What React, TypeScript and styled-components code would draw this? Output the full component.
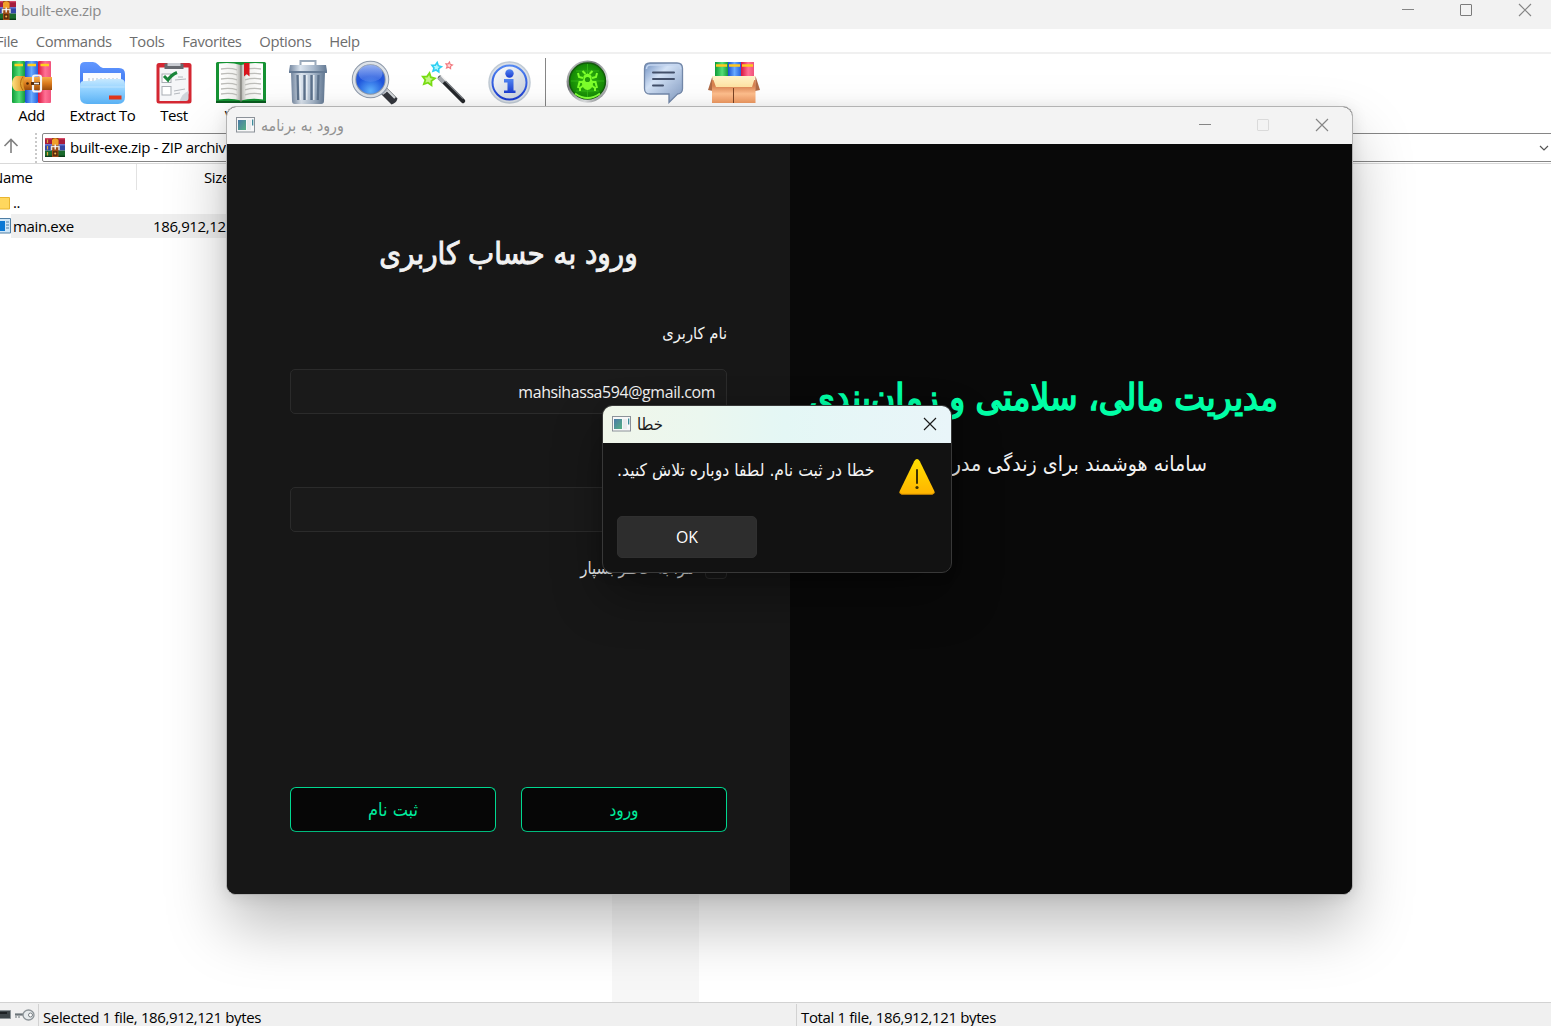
import React from "react";
import styled, { createGlobalStyle } from "styled-components";

const latin = `"Open Sans", "Noto Sans", sans-serif`;
const persian = `"DejaVu Sans Condensed", "DejaVu Sans", sans-serif`;

const Global = createGlobalStyle`
  *, *::before, *::after { box-sizing: border-box; }
  html, body { margin: 0; padding: 0; background: #fff; overflow: hidden; }
  button, input { font: inherit; color: inherit; }
`;

/* ---------- archive manager shell ---------- */

const Desktop = styled.div`
  position: relative;
  display: flex;
  flex-direction: column;
  width: 1551px;
  height: 1026px;
  overflow: hidden;
  background: #fff;
  color: #000;
  font: 15px/18px ${latin};
  letter-spacing: -0.37px;
  svg { display: block; flex: none; }
`;

const TitleBar = styled.header`
  display: flex;
  align-items: flex-start;
  justify-content: space-between;
  height: 29px;
  padding-right: 19px;
  background: #f2f2f2;
  color: #8b8b8b;
`;

const TitleName = styled.div`
  display: flex;
  gap: 5px;
  padding-top: 1px;
`;

const WindowControls = styled.div<{ $top?: number }>`
  display: flex;
  gap: 45px;
  padding-top: ${(p) => p.$top ?? 0}px;
`;

const MenuBar = styled.nav`
  display: flex;
  gap: 17.8px;
  height: 25px;
  padding: 3px 0 0;
  margin-left: -4px;
  border-bottom: 2px solid #f0f0f0;
  color: #6d6d6d;
  font-size: 14.8px;
`;

const Toolbar = styled.div`
  display: flex;
  height: 79px;
  padding-top: 6px;
`;

const Tool = styled.div<{ $width: number }>`
  display: flex;
  flex-direction: column;
  align-items: center;
  width: ${(p) => p.$width}px;
  white-space: nowrap;
`;

const ToolSeparator = styled.div`
  width: 1px;
  height: 50px;
  margin: -2px 4px 0;
  background: #868686;
`;

const AddressRow = styled.div`
  display: flex;
  height: 31px;
  border-bottom: 1px solid #d9d9d9;
`;

const UpButton = styled.div`
  display: flex;
  align-items: center;
  justify-content: center;
  width: 35px;
  padding: 0 13px 4px 0;
`;

const Grip = styled.div`
  height: 30px;
  border-left: 2px dotted #c9c9c9;
  margin-right: 5px;
`;

const AddressBox = styled.div`
  display: flex;
  align-items: center;
  flex: 1;
  gap: 5px;
  height: 29px;
  margin-right: -6px;
  padding: 0 7px 0 2px;
  border: 1px solid #868686;
  border-radius: 2px;
  white-space: nowrap;
`;

const AddressText = styled.span`
  flex: 1;
  padding-bottom: 2px;
`;

const FileArea = styled.main`
  display: grid;
  grid-template-columns: 137px 99px 376px 87px 1fr;
  grid-template-rows: 26px 24px 24px 1fr;
  flex: 1;
`;

const HeaderCell = styled.div<{ $end?: boolean }>`
  padding: 4px 0 0;
  border-right: 1px solid #e2e2e2;
  text-align: ${(p) => (p.$end ? "right" : "left")};
  ${(p) => (p.$end ? "padding-right: 5px;" : "margin-left: -8px;")}
`;

const NameCell = styled.div<{ $row: number }>`
  display: flex;
  grid-column: 1;
  grid-row: ${(p) => p.$row};
`;

const NameText = styled.span<{ $selected?: boolean }>`
  flex: 1;
  padding: 3px 0 0 2px;
  background: ${(p) => (p.$selected ? "#efefef" : "transparent")};
`;

const SizeCell = styled.div`
  grid-row: 3;
  padding: 3px 0 0 16px;
  background: #efefef;
`;

const SortedColumn = styled.div`
  grid-column: 4;
  grid-row: 1 / -1;
  background: #f7f7f7;
`;

const StatusBar = styled.footer`
  display: flex;
  height: 24px;
  border-top: 1px solid #d2d2d2;
  background: #f0f0f0;
`;

const StatusIcons = styled.div`
  display: flex;
  gap: 4px;
  width: 38px;
  padding-top: 5px;
`;

const StatusPane = styled.div<{ $width?: number }>`
  width: ${(p) => (p.$width ? `${p.$width}px` : "auto")};
  height: 22px;
  margin-top: 1px;
  padding: 4px 4px 0;
  border-left: 1px solid #d2d2d2;
`;

/* ---------- login window ---------- */

const LoginWindow = styled.section`
  position: absolute;
  left: 226px;
  top: 106px;
  display: flex;
  flex-direction: column;
  width: 1127px;
  height: 789px;
  overflow: hidden;
  border: 1px solid #b3b3b3;
  border-radius: 10px;
  box-shadow: 0 32px 60px rgba(0, 0, 0, 0.25), 0 2px 16px rgba(0, 0, 0, 0.1);
  background: #171717;
  font-family: ${persian};
  letter-spacing: 0;
`;

const LoginTitleBar = styled.header`
  display: flex;
  align-items: flex-start;
  justify-content: space-between;
  height: 37px;
  flex: none;
  padding: 0 23px 0 9px;
  background: #f3f3f3;
  color: #929292;
`;

const AppName = styled.div<{ $size: number }>`
  display: flex;
  align-items: center;
  gap: 6px;
  height: 36px;
  font-size: ${(p) => p.$size}px;
`;

const AppNameText = styled.span`
  padding-top: 2px;
`;

const LoginBody = styled.div`
  display: flex;
  flex: 1;
`;

const FormPanel = styled.form`
  display: flex;
  flex-direction: column;
  width: 563px;
  padding: 86px 63px 62px;
  background: #171717;
  color: #f2f2f2;
  direction: rtl;
`;

const FormTitle = styled.h1`
  margin: 0;
  font-size: 30.9px;
  font-weight: 400;
  line-height: 46px;
  text-align: center;
  -webkit-text-stroke: 0.9px currentColor;
`;

const Label = styled.label`
  margin-top: 43px;
  height: 30px;
  font-size: 16.4px;
  line-height: 30px;
`;

const Field = styled.input`
  width: 100%;
  height: 45px;
  padding: 0 11px;
  border: 1px solid #2b2b2b;
  border-radius: 5px;
  outline: none;
  background: #1a1a1a;
  font: 15.9px ${latin};
  letter-spacing: -0.37px;
  direction: ltr;
  text-align: right;
`;

const UserField = styled(Field)`
  margin-top: 20px;
`;

const PasswordField = styled(Field)`
  margin-top: 73px;
`;

const Remember = styled.div`
  display: flex;
  align-items: center;
  gap: 11px;
  height: 24px;
  margin-top: 24px;
  font-size: 16.5px;
`;

const RememberText = styled.span`
  padding-top: 2px;
`;

const CheckBox = styled.span`
  width: 22px;
  height: 22px;
  border: 1px solid #303030;
  border-radius: 4px;
  background: #1a1a1a;
`;

const Actions = styled.div`
  display: grid;
  grid-template-columns: 1fr 1fr;
  gap: 25px;
  margin-top: auto;
`;

const ActionButton = styled.button<{ $size: number }>`
  height: 45px;
  padding: 1px 0 0;
  border: 1px solid #00d890;
  border-bottom-color: #00b97c;
  border-radius: 6px;
  background: #060606;
  color: #00ed9d;
  font-size: ${(p) => p.$size}px;
`;

const HeroPanel = styled.div`
  flex: 1;
  padding: 227px 0 0 18px;
  background: #090909;
`;

const HeroTitle = styled.h2`
  width: 470px;
  margin: 0;
  color: #00ffa6;
  direction: rtl;
  font-size: 36.6px;
  font-weight: 400;
  line-height: 54px;
  white-space: nowrap;
  -webkit-text-stroke: 1.5px currentColor;
`;

const HeroText = styled.p`
  width: 399px;
  margin: 24px 0 0;
  color: #f2f2f2;
  direction: rtl;
  font-size: 21.2px;
  line-height: 30px;
`;

/* ---------- error dialog ---------- */

const Dialog = styled.section`
  position: absolute;
  left: 602px;
  top: 405px;
  width: 350px;
  height: 168px;
  overflow: hidden;
  border: 1px solid #383838;
  border-radius: 10px;
  background: #121212;
  box-shadow: 0 24px 48px rgba(0, 0, 0, 0.34), 0 2px 12px rgba(0, 0, 0, 0.15);
  font-family: ${persian};
  letter-spacing: 0;
`;

const DialogTitleBar = styled.header`
  display: flex;
  align-items: flex-start;
  justify-content: space-between;
  height: 37px;
  padding: 0 14px 0 9px;
  background: linear-gradient(90deg, #f0f6ea 0%, #ebf7ef 28%, #e4f7f5 52%, #e9f5f9 100%);
  color: #1b1b1b;
`;

const CloseSlot = styled.div`
  padding-top: 11px;
`;

const DialogContent = styled.div`
  display: flex;
  justify-content: space-between;
  padding: 15px 15px 0 14px;
`;

const Message = styled.p`
  margin: -3px 0 0;
  color: #f4f4f4;
  direction: rtl;
  font-size: 17.4px;
  line-height: 30px;
  white-space: nowrap;
`;

const OkButton = styled.button`
  display: block;
  width: 140px;
  height: 42px;
  margin: 20px 0 0 14px;
  padding: 0;
  border: 1px solid #303030;
  border-radius: 5px;
  background: #2d2d2d;
  color: #fff;
  font: 15.9px ${latin};
`;

/* ---------- drawings ---------- */

const CloseGlyph = ({ color }: { color: string }) => (
  <svg width="14" height="14" viewBox="0 0 14 14" stroke={color} strokeWidth="1.15" fill="none">
    <path d="M1 1l12 12M13 1L1 13" />
  </svg>
);

const MinimizeGlyph = ({ color }: { color: string }) => (
  <svg width="13" height="14" viewBox="0 0 13 14" stroke={color} fill="none">
    <path d="M1 6.500h12" />
  </svg>
);

const MaximizeGlyph = ({ color }: { color: string }) => (
  <svg width="14" height="14" viewBox="0 0 14 14" stroke={color} fill="none">
    <rect x="1.5" y="1.5" width="11" height="11" rx=".5" />
  </svg>
);

const Controls = ({ top, dimMax }: { top: number; dimMax?: boolean }) => (
  <WindowControls $top={top}>
    <MinimizeGlyph color="#858585" />
    <MaximizeGlyph color={dimMax ? "#dadada" : "#7b7b7b"} />
    <CloseGlyph color="#858585" />
  </WindowControls>
);

const AppGlyph = () => (
  <svg width="19" height="16" viewBox="0 0 19 16">
    <defs>
      <linearGradient id="appPane" x2="1" y2="1">
        <stop stopColor="#4a79a8" />
        <stop offset="1" stopColor="#55b083" />
      </linearGradient>
    </defs>
    <rect x=".5" y=".5" width="18" height="14.5" fill="#f7f7f8" stroke="#8c9299" />
    <rect x="2" y="3" width="8" height="10" fill="url(#appPane)" />
    <rect x="11" y="3" width="4" height="10" fill="#e9ebed" />
    <rect x="16" y="2.5" width="1.3" height="6" fill="#3f8c9c" />
  </svg>
);

const RarGlyph = ({ clip = 0 }: { clip?: number }) => (
  <svg width={20 - clip} height="19" viewBox={`${clip} 0 ${20 - clip} 19`}>
    <rect x="0" y="0" width="20" height="6.4" fill="#a51c3c" />
    <rect x="0" y="0" width="20" height="1.3" fill="#d64a67" />
    <rect x="0" y="6.4" width="20" height="6.2" fill="#3446a5" />
    <rect x="0" y="6.4" width="20" height="1" fill="#6d7fe0" />
    <rect x="0" y="12.6" width="20" height="6.4" fill="#1a6a2c" />
    <rect x="0" y="17.6" width="20" height="1.4" fill="#0b3c18" />
    <path d="M2.5 1.5v3.5M2.5 8v3.5M2.5 14v3.5" stroke="#e0a63a" strokeWidth="1.2" />
    <rect x="7" y="0" width="6.500" height="19" fill="#9c4b14" />
    <path d="M7 2q3.200-3.500 6.500 0v5H7z" fill="#f0a02a" />
    <path d="M6.500 12V8.500h7.500V12" fill="none" stroke="#e9e4d8" strokeWidth="1.500" />
    <path d="M10.200 6.500v5" stroke="#fff" strokeWidth="1.300" />
    <path d="M8 13h4.500v5H8z" fill="#5c2c0c" />
    <circle cx="10.200" cy="15.500" r="1" fill="#f2bd52" />
  </svg>
);

const BooksIcon = () => (
  <svg width="42" height="46" viewBox="0 0 42 46">
    <defs>
      <linearGradient id="bkG"><stop stopColor="#0e9c38" /><stop offset=".55" stopColor="#54dd77" /><stop offset="1" stopColor="#169a3c" /></linearGradient>
      <linearGradient id="bkB"><stop stopColor="#174ed0" /><stop offset=".5" stopColor="#69aaff" /><stop offset="1" stopColor="#2461dc" /></linearGradient>
      <linearGradient id="bkR"><stop stopColor="#d8143c" /><stop offset=".55" stopColor="#ff7195" /><stop offset="1" stopColor="#f0527b" /></linearGradient>
      <linearGradient id="belt" x2="0" y2="1"><stop stopColor="#f6ae4a" /><stop offset=".5" stopColor="#d97a1c" /><stop offset="1" stopColor="#9a4c0c" /></linearGradient>
      <linearGradient id="beltTip"><stop stopColor="#ffe180" /><stop offset="1" stopColor="#d98a19" /></linearGradient>
    </defs>
    <rect x="1" y="1" width="13" height="42" rx="1" fill="url(#bkG)" />
    <rect x="14" y="1" width="13" height="42" rx="1" fill="url(#bkB)" />
    <rect x="27" y="1" width="13" height="42" rx="1" fill="url(#bkR)" />
    <path d="M3.500 5h8.500M16.500 5H25M29.500 5H38" stroke="#ffd21f" strokeWidth="2.400" />
    <path d="M10 17h31v13H10z" fill="url(#belt)" />
    <path d="M5 16h9q-3 7.500 0 15H5q-4-2-4-7.500T5 16z" fill="url(#beltTip)" />
    <path d="M12 16.500q-5 7 0 14" fill="none" stroke="#b36b10" />
    <circle cx="16.500" cy="23.500" r="1.300" fill="#4a2506" />
    <rect x="22" y="15.500" width="8" height="16" rx="2" fill="none" stroke="#f4f4f4" strokeWidth="2.200" />
    <path d="M20 23.500h9" stroke="#5b2e0c" strokeWidth="3" />
    <path d="M23 23.500h5" stroke="#f4f4f4" strokeWidth="1.600" />
  </svg>
);

const FolderIcon = () => (
  <svg width="47" height="46" viewBox="0 0 47 46">
    <defs>
      <linearGradient id="fdBack" x2="0" y2="1"><stop stopColor="#6298ff" /><stop offset="1" stopColor="#2d68ea" /></linearGradient>
      <linearGradient id="fdFront" x2="0" y2="1"><stop stopColor="#c5e8ff" /><stop offset=".45" stopColor="#8fd0ff" /><stop offset="1" stopColor="#59b1f4" /></linearGradient>
    </defs>
    <path d="M1 37V7q0-5 5-5h8q3 0 5 2.500T24 8h16q6 0 6 6v23z" fill="url(#fdBack)" />
    <path d="M4 13h38v14H4z" fill="#fafcff" />
    <path d="M10 18v5M14 18v5M18 18v5M22 18v5M26 18v5M30 18v5M34 18v5M38 18v5" stroke="#b4c0ce" />
    <path d="M1 25q0-4 4-4h8q3 0 4-1t4-1h20q5 0 5 5v13q0 7-7 7H8q-7 0-7-7z" fill="url(#fdFront)" />
    <path d="M1.500 27h44" stroke="#ddf3ff" opacity=".5" />
    <rect x="30" y="35.500" width="12.500" height="4" fill="#e0361a" />
  </svg>
);

const TestIcon = () => (
  <svg width="36" height="46" viewBox="0 0 36 46">
    <rect x=".5" y="3" width="35" height="40.500" rx="2.500" fill="#d42732" />
    <path d="M3.500 7.500h29V33q-1 7-9 8h-20z" fill="#f5f6f8" />
    <path d="M32.500 31q-6 2-9 10H30q2.500 0 2.500-3z" fill="#cfd4da" />
    <path d="M8.500 9V4.500q0-1 1-1h17q1 0 1 1V9z" fill="#66696f" />
    <path d="M11.500 3h13v3h-13z" fill="#c9ccd2" />
    <rect x="6" y="14" width="9" height="8.500" fill="#fff" stroke="#a9adb3" />
    <rect x="6" y="26.500" width="9" height="8.500" fill="#fff" stroke="#a9adb3" />
    <path d="M8 16l4 4q3-5 9-7.500" fill="none" stroke="#19853a" strokeWidth="3" />
    <path d="M19 20l11-1M22 17h5M18 31l11-2M18 34l6-1" stroke="#b4b8be" />
  </svg>
);

const BookIcon = () => (
  <svg width="52" height="46" viewBox="0 0 52 46">
    <defs>
      <linearGradient id="pgL"><stop stopColor="#fff" /><stop offset=".75" stopColor="#efefec" /><stop offset="1" stopColor="#a7a7a2" /></linearGradient>
      <linearGradient id="pgR"><stop stopColor="#b5b5b0" /><stop offset=".25" stopColor="#f1f1ee" /><stop offset="1" stopColor="#fff" /></linearGradient>
    </defs>
    <rect x="1" y="2" width="50" height="41" rx="1.500" fill="#159233" />
    <path d="M1 41h50v2H1z" fill="#0a5d1f" />
    <path d="M4 3.500q12-1.500 22 1.500v35.500q-10-3-22-1z" fill="url(#pgL)" />
    <path d="M48 3.500q-12-1.500-22 1.500v35.500q10-3 22-1z" fill="url(#pgR)" />
    {[9, 14, 19, 24, 29, 34].map((y) => (
      <path key={y} d={`M6 ${y}q9-1.500 16 .8M30 ${y + 0.8}q8-2.300 16-.8`} stroke="#bdbdb9" strokeWidth="1.300" fill="none" />
    ))}
    <path d="M29 3h5.500v13.500L31.700 14 29 16.500z" fill="#d8141c" />
    <path d="M26 5v37" stroke="#6e6e69" />
  </svg>
);

const TrashIcon = () => (
  <svg width="40" height="46" viewBox="0 0 40 46">
    <defs>
      <linearGradient id="bin"><stop stopColor="#72859e" /><stop offset=".3" stopColor="#dce5ef" /><stop offset=".65" stopColor="#a9b9cc" /><stop offset="1" stopColor="#627892" /></linearGradient>
    </defs>
    <path d="M12.500 6V1h15v5" fill="none" stroke="#9baabb" strokeWidth="2" />
    <path d="M3 12h34l-1 29q0 3-3 3H7q-3 0-3-3z" fill="url(#bin)" />
    <path d="M9.500 15l.7 25M16.500 15v25M23.500 15v25M30.500 15l-.7 25" stroke="#5d728c" strokeWidth="2.300" />
    <path d="M11.800 15l.7 25M18.800 15v25M25.800 15v25" stroke="#eef3f8" strokeWidth="1.300" />
    <path d="M2 5h36l1 6H1z" fill="url(#bin)" />
    <path d="M1 11h38v2H1z" fill="#667b95" />
  </svg>
);

const SearchIcon = () => (
  <svg width="48" height="46" viewBox="0 0 48 46">
    <defs>
      <radialGradient id="lens" cx=".5" cy=".85" r=".9"><stop stopColor="#5fb4ff" /><stop offset=".5" stopColor="#1f55dc" /><stop offset="1" stopColor="#3b66dc" /></radialGradient>
      <linearGradient id="shine" x2="0" y2="1"><stop stopColor="#b9cdf8" stopOpacity=".75" /><stop offset="1" stopColor="#769af2" stopOpacity=".25" /></linearGradient>
    </defs>
    <path d="M30 34l6-6 10.500 10.500q-1 4.500-6 6z" fill="#34373d" />
    <path d="M33 33l3-3 8 8" stroke="#d7dade" strokeWidth="2.200" fill="none" />
    <path d="M29 31l4-4 4 3-5 5z" fill="#b9bec5" />
    <circle cx="19.500" cy="19.500" r="16.500" fill="url(#lens)" stroke="#8d99aa" strokeWidth="4.500" />
    <circle cx="19.500" cy="19.500" r="16.500" fill="none" stroke="#dde2e8" strokeWidth="2.600" />
    <ellipse cx="19.500" cy="13.500" rx="12" ry="8.500" fill="url(#shine)" />
  </svg>
);

const star = (cx: number, cy: number, r: number) =>
  Array.from({ length: 10 }, (_, i) => {
    const a = -Math.PI / 2 + 0.15 + (i * Math.PI) / 5;
    const d = i % 2 ? r * 0.5 : r;
    return `${(cx + Math.cos(a) * d).toFixed(1)},${(cy + Math.sin(a) * d).toFixed(1)}`;
  }).join(" ");

const WandIcon = () => (
  <svg width="46" height="46" viewBox="0 0 46 46">
    <path d="M19 18l23 23" stroke="#25272b" strokeWidth="4.500" strokeLinecap="round" />
    <path d="M20 16.500l22 22" stroke="#85898f" strokeWidth="1.200" />
    <path d="M18 17l5 5" stroke="#a6aaaf" strokeWidth="5" />
    <path d="M20.500 16l4.500 4.500" stroke="#f5f5f5" strokeWidth="1.500" />
    <polygon points={star(7.5, 19.5, 6.5)} fill="#c3f784" stroke="#79dd14" strokeWidth="1.800" />
    <polygon points={star(15.5, 7.5, 5)} fill="#adf7ff" stroke="#2dcff2" strokeWidth="1.600" />
    <polygon points={star(28, 5.5, 3.5)} fill="#ffd9d9" stroke="#f27a80" strokeWidth="1.100" />
  </svg>
);

const InfoIcon = () => (
  <svg width="44" height="46" viewBox="0 0 44 46">
    <defs>
      <linearGradient id="infoBg" x2="1" y2="1"><stop stopColor="#fff" /><stop offset="1" stopColor="#c3ccd8" /></linearGradient>
      <linearGradient id="infoFg" x2="0" y2="1"><stop stopColor="#5186f2" /><stop offset="1" stopColor="#1b3cd0" /></linearGradient>
    </defs>
    <circle cx="21.500" cy="22.500" r="20.500" fill="#d9dfe6" stroke="#c0cad4" strokeWidth="1.500" />
    <circle cx="21.500" cy="22.500" r="17" fill="url(#infoBg)" stroke="url(#infoFg)" strokeWidth="2" />
    <circle cx="21.500" cy="13.500" r="4.200" fill="url(#infoFg)" />
    <path d="M16 19h9.500v11.500h2V33H16v-2.500h3.500v-8H16z" fill="url(#infoFg)" />
  </svg>
);

const VirusIcon = () => (
  <svg width="44" height="46" viewBox="0 0 44 46">
    <defs>
      <linearGradient id="ring" x2="1" y2="1"><stop stopColor="#e8e8e8" /><stop offset=".35" stopColor="#74777a" /><stop offset=".7" stopColor="#e2e4e6" /><stop offset="1" stopColor="#55585b" /></linearGradient>
      <radialGradient id="scan"><stop stopColor="#34ba10" /><stop offset="1" stopColor="#138605" /></radialGradient>
    </defs>
    <circle cx="21.500" cy="21.500" r="21" fill="url(#ring)" />
    <circle cx="21.500" cy="21" r="18" fill="url(#scan)" stroke="#145c0c" strokeWidth="1.500" />
    <path d="M21.500 4v34M5 21h33M10 11h23M10 31h23" stroke="#44d322" opacity=".5" />
    <path d="M9 33.500q12.500 9 25 0" stroke="#83ff3c" strokeWidth="2" fill="none" />
    <g stroke="#7dff2b" strokeWidth="2" fill="none">
      <path d="M16.500 11l3 3M26.500 11l-3 3M17 18l-4-1-1-4M26 18l4-1 1-4M17 22h-3.500l-1.500 6M26 22h3.500l1.500 6M18 25l-4 3v3M25 25l4 3v3" />
    </g>
    <path d="M17.500 16q4-5 8 0v3h-8z" fill="#7dff2b" />
    <ellipse cx="21.500" cy="23.500" rx="5.500" ry="6.500" fill="#7dff2b" />
    <circle cx="21.500" cy="19.500" r="2.600" fill="#239b0b" />
  </svg>
);

const CommentIcon = () => (
  <svg width="42" height="46" viewBox="0 0 42 46">
    <defs>
      <linearGradient id="bubble" x2="1" y2="1"><stop stopColor="#6f8fc0" /><stop offset=".35" stopColor="#d3e2f6" /><stop offset="1" stopColor="#8099c0" /></linearGradient>
    </defs>
    <path d="M7 3h27q5.500 0 5.500 5.500v20q0 5-5 5.500L26 42.500V34H7q-5.500 0-5.500-5.500v-20Q1.500 3 7 3z" fill="url(#bubble)" stroke="#7388a9" strokeWidth="1.300" />
    <path d="M3.500 9q0-4 4-4h26q4 0 4 4" fill="none" stroke="#c3d5ef" strokeWidth="1.500" />
    <path d="M10 12.500h21M10 19h21M10 25.500h10" stroke="#43506a" strokeWidth="2" strokeLinecap="round" />
  </svg>
);

const SfxIcon = () => (
  <svg width="52" height="46" viewBox="0 0 52 46">
    <defs>
      <linearGradient id="boxFront" x2="0" y2="1"><stop stopColor="#d98350" /><stop offset=".25" stopColor="#d98350" /><stop offset=".6" stopColor="#ffbf8e" /><stop offset="1" stopColor="#f09a62" /></linearGradient>
      <linearGradient id="boxFlap" x2="0" y2="1"><stop stopColor="#fff3c9" /><stop offset="1" stopColor="#ffe3a4" /></linearGradient>
    </defs>
    <rect x="7" y="2" width="13" height="20" fill="url(#bkG)" />
    <rect x="20" y="2" width="13" height="20" fill="url(#bkB)" />
    <rect x="33" y="2" width="13" height="20" fill="url(#bkR)" />
    <path d="M8 5.500h11M21 5.500h11M34 5.500h11" stroke="#ffc71f" strokeWidth="2.600" />
    <path d="M4.500 16L0 30l5 1zM47.500 16L52 30l-5 1z" fill="#b06a45" />
    <path d="M4 20h43.500v23H4z" fill="url(#boxFront)" />
    <path d="M4 16h43.500L44 27H8z" fill="url(#boxFlap)" />
    <path d="M25.500 28v15" stroke="#7a4324" />
  </svg>
);

const WarningIcon = () => (
  <svg width="38" height="38" viewBox="0 0 38 38">
    <defs>
      <linearGradient id="warn" x2="0" y2="1"><stop stopColor="#ffe000" /><stop offset="1" stopColor="#ffb400" /></linearGradient>
    </defs>
    <path d="M16.200 3.200q2.800-4.400 5.600 0L36.300 33q1 3-1.800 3.300h-31Q.7 36 1.700 33z" fill="url(#warn)" />
    <path d="M2 34.500q.5 1.800 2 1.800h30q1.500 0 2-1.800" fill="none" stroke="#c98600" />
    <path d="M19 12v13" stroke="#3c3100" strokeWidth="2" strokeLinecap="round" />
    <circle cx="19" cy="29.500" r="1.600" fill="#3c3100" />
  </svg>
);

const tools: { width: number; label?: string; Icon: React.FC }[] = [
  { width: 63, label: "Add", Icon: BooksIcon },
  { width: 79, label: "Extract To", Icon: FolderIcon },
  { width: 64, label: "Test", Icon: TestIcon },
  { width: 69, label: "View", Icon: BookIcon },
  { width: 66, Icon: TrashIcon },
  { width: 68, Icon: SearchIcon },
  { width: 70, Icon: WandIcon },
  { width: 62, Icon: InfoIcon },
];

const extraTools: { width: number; Icon: React.FC }[] = [
  { width: 76, Icon: VirusIcon },
  { width: 76, Icon: CommentIcon },
  { width: 64, Icon: SfxIcon },
];

export default function App() {
  return (
    <Desktop>
      <Global />
      <TitleBar>
        <TitleName>
          <RarGlyph clip={4} />
          built-exe.zip
        </TitleName>
        <Controls top={3} />
      </TitleBar>
      <MenuBar>
        {["File", "Commands", "Tools", "Favorites", "Options", "Help"].map((m) => (
          <span key={m}>{m}</span>
        ))}
      </MenuBar>
      <Toolbar>
        {tools.map(({ width, label, Icon }, i) => (
          <Tool key={i} $width={width}>
            <Icon />
            {label}
          </Tool>
        ))}
        <ToolSeparator />
        {extraTools.map(({ width, Icon }, i) => (
          <Tool key={i} $width={width}>
            <Icon />
          </Tool>
        ))}
      </Toolbar>
      <AddressRow>
        <UpButton>
          <svg width="16" height="16" viewBox="0 0 16 16" fill="none" stroke="#808080" strokeWidth="1.600">
            <path d="M8 15V2M1.500 8L8 1.500 14.500 8" />
          </svg>
        </UpButton>
        <Grip />
        <AddressBox>
          <RarGlyph />
          <AddressText>built-exe.zip - ZIP archive</AddressText>
          <svg width="10" height="6" viewBox="0 0 10 6" fill="none" stroke="#555" strokeWidth="1.200">
            <path d="M1 1l4 4 4-4" />
          </svg>
        </AddressBox>
      </AddressRow>
      <FileArea>
        <HeaderCell>Name</HeaderCell>
        <HeaderCell $end>Size</HeaderCell>
        <SortedColumn />
        <NameCell $row={2}>
          <svg width="11" height="22" viewBox="0 0 11 22">
            <path d="M-1 7.500H9.500V19H-1z" fill="#ffd75e" stroke="#e9b52f" />
          </svg>
          <NameText>..</NameText>
        </NameCell>
        <NameCell $row={3}>
          <svg width="11" height="22" viewBox="0 0 11 22">
            <path d="M-1 4.500h11.500V19H-1z" fill="#cfe6f7" stroke="#4f7ea4" />
            <path d="M0 7h5v10H0z" fill="#0a78d4" />
            <path d="M6 8h3M6 11h3M6 14h3" stroke="#4f7ea4" />
          </svg>
          <NameText $selected>main.exe</NameText>
        </NameCell>
        <SizeCell>186,912,121</SizeCell>
      </FileArea>
      <StatusBar>
        <StatusIcons>
          <svg width="11" height="14" viewBox="0 0 11 14">
            <path d="M-1 2.500h11.500v8H-1z" fill="#3c4448" stroke="#8b9296" />
            <path d="M0 5h7" stroke="#1b2023" strokeWidth="2" />
          </svg>
          <svg width="20" height="14" viewBox="0 0 20 14">
            <path d="M0 6.500h10" stroke="#6b7479" strokeWidth="2.200" />
            <path d="M1 8v2M4 8v2" stroke="#6b7479" />
            <ellipse cx="13.500" cy="7" rx="5.500" ry="5" fill="#e6eaec" stroke="#8d9498" strokeWidth="1.300" />
            <circle cx="15.500" cy="7" r="2" fill="#fff" stroke="#777e82" />
          </svg>
        </StatusIcons>
        <StatusPane $width={758}>Selected 1 file, 186,912,121 bytes</StatusPane>
        <StatusPane>Total 1 file, 186,912,121 bytes</StatusPane>
      </StatusBar>

      <LoginWindow>
        <LoginTitleBar>
          <AppName $size={15.8}>
            <AppGlyph />
            <AppNameText>ورود به برنامه</AppNameText>
          </AppName>
          <Controls top={11} dimMax />
        </LoginTitleBar>
        <LoginBody>
          <FormPanel>
            <FormTitle>ورود به حساب کاربری</FormTitle>
            <Label>نام کاربری</Label>
            <UserField readOnly value="mahsihassa594@gmail.com" />
            <PasswordField readOnly type="password" value="" />
            <Remember>
              <CheckBox />
              <RememberText>مرا به خاطر بسپار</RememberText>
            </Remember>
            <Actions>
              <ActionButton type="button" $size={17}>ورود</ActionButton>
              <ActionButton type="button" $size={18}>ثبت نام</ActionButton>
            </Actions>
          </FormPanel>
          <HeroPanel>
            <HeroTitle>مدیریت مالی، سلامتی و زمان‌بندی</HeroTitle>
            <HeroText>سامانه هوشمند برای زندگی مدرن</HeroText>
          </HeroPanel>
        </LoginBody>
      </LoginWindow>

      <Dialog>
        <DialogTitleBar>
          <AppName $size={16.6}>
            <AppGlyph />
            <AppNameText>خطا</AppNameText>
          </AppName>
          <CloseSlot>
            <CloseGlyph color="#1b1b1b" />
          </CloseSlot>
        </DialogTitleBar>
        <DialogContent>
          <Message>خطا در ثبت نام. لطفا دوباره تلاش کنید.</Message>
          <WarningIcon />
        </DialogContent>
        <OkButton>OK</OkButton>
      </Dialog>
    </Desktop>
  );
}
